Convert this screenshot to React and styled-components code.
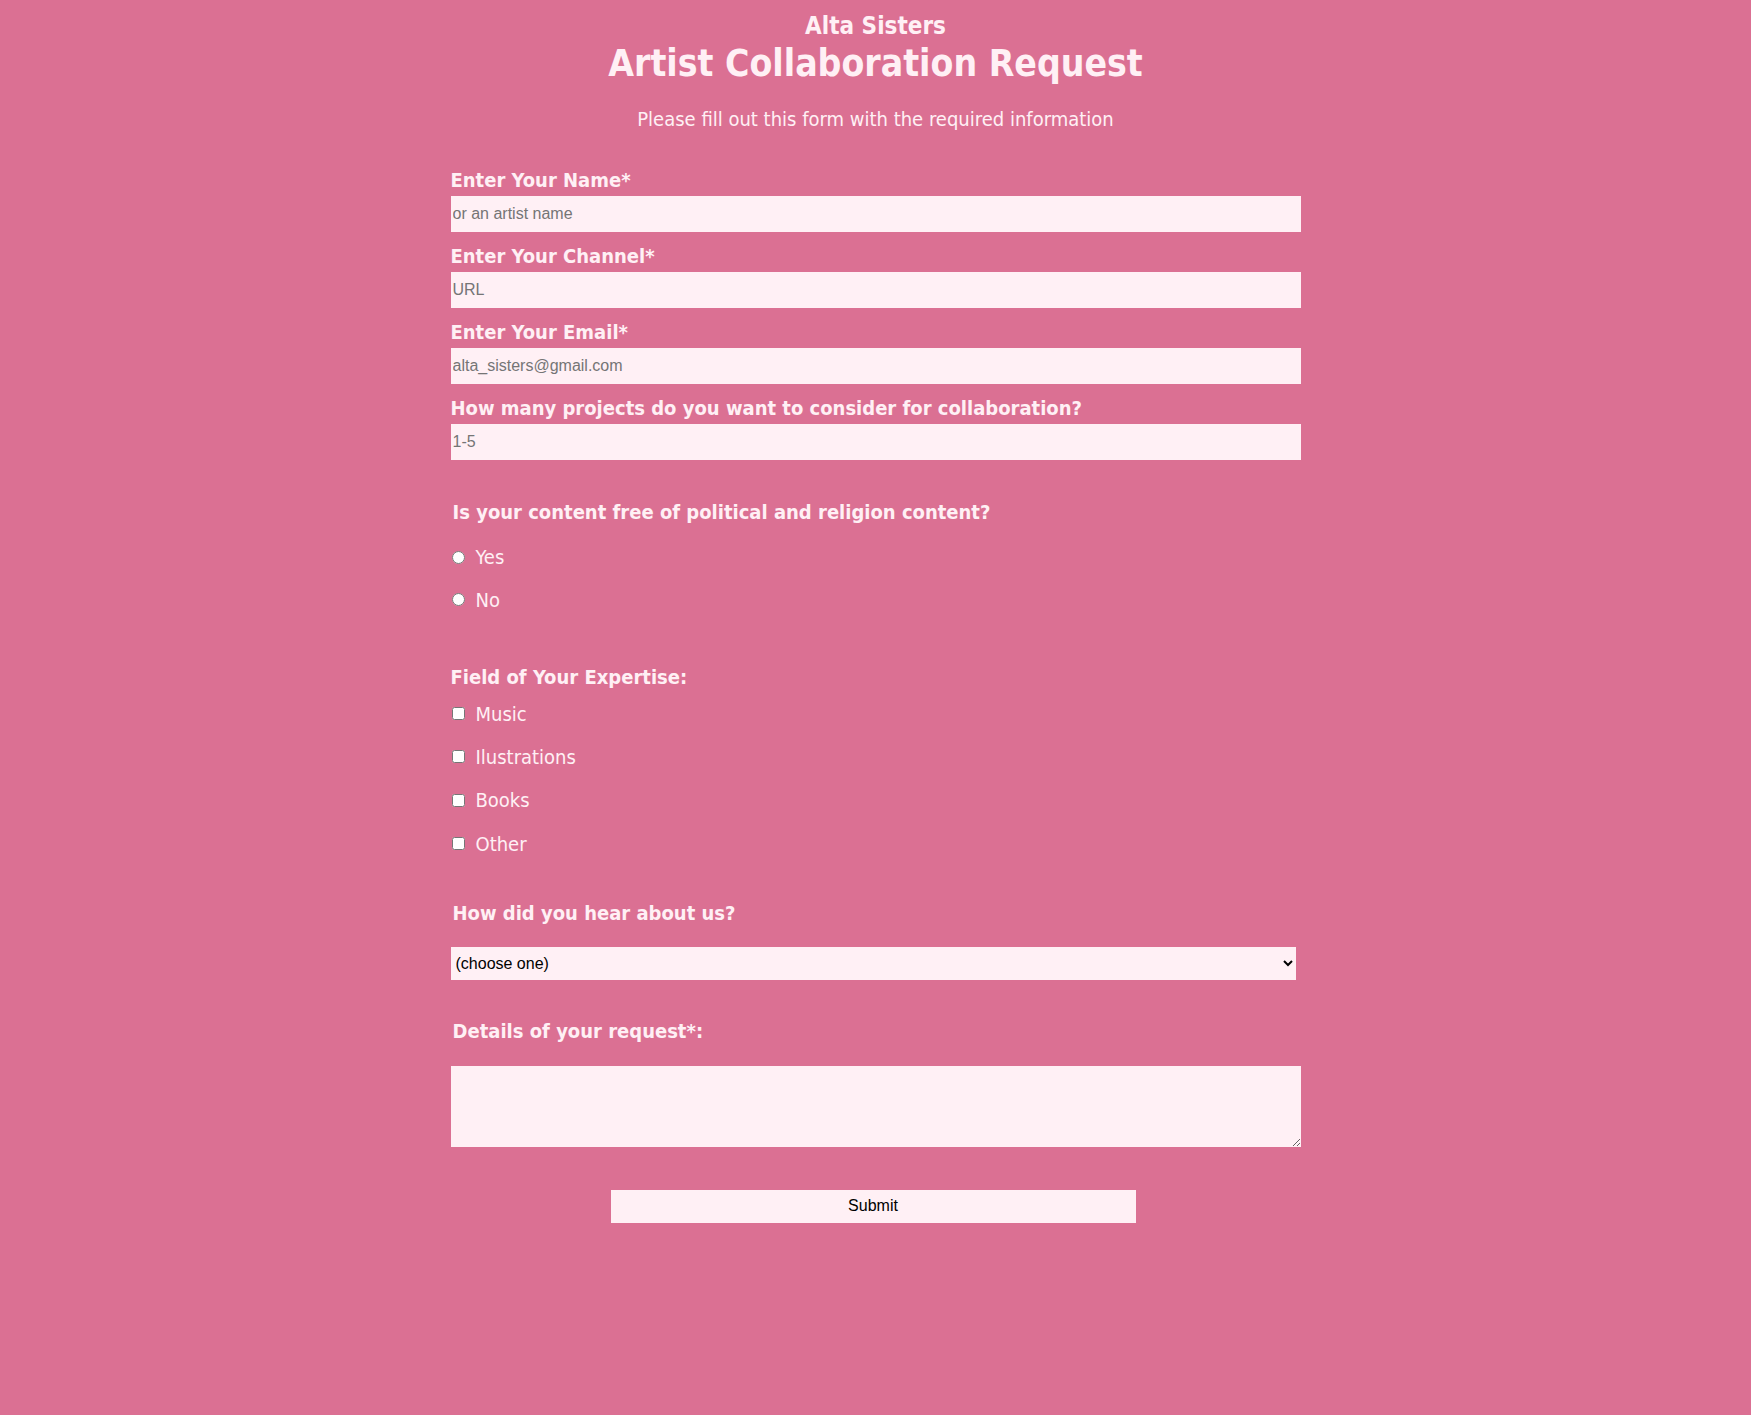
import React from 'react';
import styled, { createGlobalStyle } from 'styled-components';

const GlobalStyle = createGlobalStyle`
  html, body {
    margin: 0;
    padding: 0;
    background: #db7093;
  }
  body {
    font-family: "DejaVu Sans Condensed", "DejaVu Sans", sans-serif;
    color: #fff0f5;
  }
`

const Page = styled.main`
  min-height: 1415px;
  padding-top: 12px;
  box-sizing: border-box;
`

const Header = styled.header`
  text-align: center;
`

const Brand = styled.h2`
  margin: 0;
  font-size: 24px;
  line-height: 28px;
  font-weight: bold;
`

const Title = styled.h1`
  margin: 0;
  font-size: 37px;
  line-height: 48px;
  font-weight: bold;
`

const Subtitle = styled.p`
  margin: 19px 0 0;
  font-size: 20px;
  line-height: 24px;
`

const Form = styled.form`
  width: 850px;
  margin: 37px auto 0;
  display: flex;
  flex-direction: column;
`

const Field = styled.div`
  display: flex;
  flex-direction: column;
  gap: 4px;
  margin-bottom: 12px;
`

const Label = styled.label`
  display: block;
  font-size: 20px;
  line-height: 24px;
  font-weight: bold;
  padding-left: ${p => (p.$indent ? '2px' : '0')};
`

const TextInput = styled.input`
  display: block;
  box-sizing: border-box;
  width: 100%;
  height: 36px;
  border: none;
  padding: 0 2px;
  background: #fff0f5;
  font-family: "Liberation Sans", Arial, sans-serif;
  font-size: 16px;
  color: #000;
  &::placeholder {
    color: #757575;
  }
`

const Group = styled.div`
  display: flex;
  flex-direction: column;
  margin-top: ${p => p.$top}px;
`

const Choices = styled.div`
  display: flex;
  flex-direction: column;
  gap: ${p => p.$gap}px;
  margin-top: ${p => p.$top}px;
`

const Choice = styled.label`
  display: flex;
  align-items: center;
  gap: 11px;
  font-size: 20px;
  line-height: 24px;
  height: 24px;
  input {
    margin: 0 0 0 1px;
    width: 13px;
    height: 13px;
  }
`

const Select = styled.select`
  display: block;
  width: 845px;
  height: 33px;
  border: none;
  background: #fff0f5;
  color: #000;
  font-family: "Liberation Sans", Arial, sans-serif;
  font-size: 16px;
  padding: 0 1px;
  margin-top: 22px;
`

const TextArea = styled.textarea`
  display: block;
  box-sizing: border-box;
  width: 850px;
  height: 81px;
  border: none;
  background: #fff0f5;
  margin-top: 23px;
  font-family: "Liberation Sans", Arial, sans-serif;
`

const Submit = styled.button`
  align-self: flex-start;
  width: 525px;
  height: 33px;
  margin: 43px 0 0 160px;
  border: none;
  background: #fff0f5;
  color: #000;
  font-family: "Liberation Sans", Arial, sans-serif;
  font-size: 16px;
  cursor: pointer;
`

const textFields = [
  { id: 'name', label: 'Enter Your Name*', placeholder: 'or an artist name', type: 'text' },
  { id: 'channel', label: 'Enter Your Channel*', placeholder: 'URL', type: 'url' },
  { id: 'email', label: 'Enter Your Email*', placeholder: 'alta_sisters@gmail.com', type: 'email' },
  { id: 'number', label: 'How many projects do you want to consider for collaboration?', placeholder: '1-5', type: 'text' },
]

const fields = ['Music', 'Ilustrations', 'Books', 'Other']

function App() {
  return (
    <Page>
      <GlobalStyle />
      <Header>
        <Brand>Alta Sisters</Brand>
        <Title>Artist Collaboration Request</Title>
        <Subtitle>Please fill out this form with the required information</Subtitle>
      </Header>
      <Form onSubmit={e => e.preventDefault()}>
        {textFields.map(f => (
          <Field key={f.id}>
            <Label htmlFor={f.id}>{f.label}</Label>
            <TextInput id={f.id} type={f.type} placeholder={f.placeholder} />
          </Field>
        ))}

        <Group $top={28}>
          <Label $indent>Is your content free of political and religion content?</Label>
          <Choices $gap={18.5} $top={21}>
            <Choice><input type='radio' name='free' value='yes' />Yes</Choice>
            <Choice><input type='radio' name='free' value='no' />No</Choice>
          </Choices>
        </Group>

        <Group $top={53}>
          <Label>Field of Your Expertise:</Label>
          <Choices $gap={19.4} $top={13}>
            {fields.map(name => (
              <Choice key={name}><input type='checkbox' value={name} />{name}</Choice>
            ))}
          </Choices>
        </Group>

        <Group $top={45}>
          <Label $indent htmlFor='referer'>How did you hear about us?</Label>
          <Select id='referer' defaultValue=''>
            <option value=''>(choose one)</option>
            <option value='youtube'>YouTube</option>
            <option value='instagram'>Instagram</option>
            <option value='friend'>A friend</option>
          </Select>
        </Group>

        <Group $top={39}>
          <Label $indent htmlFor='details'>Details of your request*:</Label>
          <TextArea id='details' />
        </Group>

        <Submit type='submit'>Submit</Submit>
      </Form>
    </Page>
  )
}

export default App;
